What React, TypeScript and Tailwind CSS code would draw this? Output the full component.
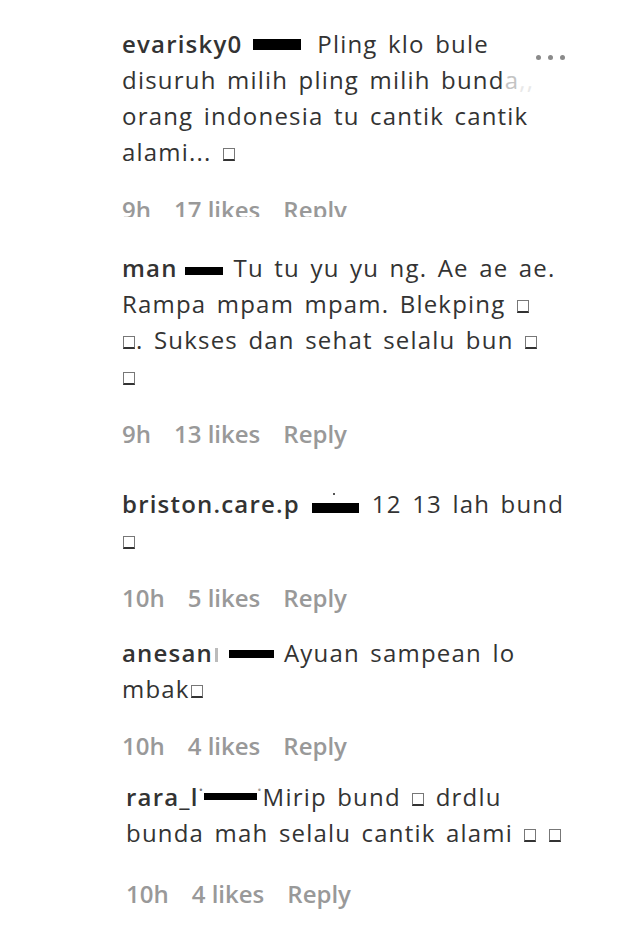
import React from "react";

const Bar = ({ cls }: { cls: string }) => <span className={`inline-block bg-black ${cls}`} />;

const Tofu = () => (
  <span className="inline-block w-[12px] h-[13px] border border-[#777] border-b-2 border-b-[#333] align-[0px] mx-[1px]" />
);

const Meta = ({ time, likes, extra }: { time: string; likes: string; extra?: string }) => (
  <div className={`flex gap-[23px] font-semibold text-[#999] whitespace-nowrap tracking-normal [word-spacing:0px] ${extra ?? ""}`}>
    <span>{time}</span>
    <span>{likes}</span>
    <span>Reply</span>
  </div>
);

const Name = ({ children }: { children: React.ReactNode }) => (
  <span className="font-semibold text-[#333]">{children}</span>
);

export default function App() {
  return (
    <div className="w-[640px] h-[928px] bg-white overflow-hidden font-['Open_Sans',sans-serif] text-[24px] leading-[36px] text-[#333]">
      <div className="pl-[122px] pt-[26px]">
        {/* Comment 1 */}
        <div className="flex">
          <div className="w-[414px] shrink-0 whitespace-nowrap tracking-[1.2px] [word-spacing:3px]">
            <div>
              <Name>evarisky0</Name>{" "}
              <Bar cls="w-[48px] h-[11px] align-[3px] mr-[6px]" /> Pling klo bule
            </div>
            <div>
              disuruh milih pling milih bund<span className="text-[#c4c4c4]">a</span>
              <span className="text-[#e8e8e8]">,,</span>
            </div>
            <div>orang indonesia tu cantik cantik</div>
            <div>
              alami... <Tofu />
            </div>
          </div>
          <div className="flex gap-[7px] pt-[29px]">
            <span className="w-[5px] h-[5px] rounded-full bg-[#8a8a8a]" />
            <span className="w-[5px] h-[5px] rounded-full bg-[#8a8a8a]" />
            <span className="w-[5px] h-[5px] rounded-full bg-[#8a8a8a]" />
          </div>
        </div>
        <div className="mt-[22px] h-[25px] overflow-hidden">
          <Meta time="9h" likes="17 likes" />
        </div>

        {/* Comment 2 */}
        <div className="mt-[33px] whitespace-nowrap tracking-[1.2px] [word-spacing:3px]">
          <div>
            <Name>man</Name>{" "}
            <Bar cls="w-[38px] h-[8px] align-[2px] -ml-[3px]" /> Tu tu yu yu ng. Ae ae ae.
          </div>
          <div>
            Rampa mpam mpam. Blekping <Tofu />
          </div>
          <div>
            <Tofu />. Sukses dan sehat selalu bun <Tofu />
          </div>
          <div>
            <Tofu />
          </div>
        </div>
        <Meta time="9h" likes="13 likes" extra="mt-[22px]" />

        {/* Comment 3 */}
        <div className="mt-[34px] whitespace-nowrap tracking-[1.2px] [word-spacing:3px]">
          <div>
            <Name>briston.care.p</Name>{" "}
            <span className="relative inline-block align-[0px] ml-[2px] mr-[2px]">
              <span className="block w-[47px] h-[10px] bg-black" />
              <span className="absolute left-[21px] -top-[10px] w-[2px] h-[2px] bg-[#555]" />
            </span>{" "}
            12 13 lah bund
          </div>
          <div>
            <Tofu />
          </div>
        </div>
        <Meta time="10h" likes="5 likes" extra="mt-[22px]" />

        {/* Comment 4 */}
        <div className="mt-[19px] whitespace-nowrap tracking-[1.2px] [word-spacing:3px]">
          <div>
            <Name>anesan</Name>
            <span className="inline-block w-[3px] h-[14px] bg-[#bbb] align-[0px] ml-[2px]" />{" "}
            <Bar cls="w-[45px] h-[8px] align-[4px]" /> Ayuan sampean lo
          </div>
          <div>
            mbak<Tofu />
          </div>
        </div>
        <Meta time="10h" likes="4 likes" extra="mt-[21px]" />

        {/* Comment 5 */}
        <div className="pl-[4px]">
          <div className="mt-[15px] whitespace-nowrap tracking-[1.2px] [word-spacing:3px]">
            <div>
              <Name>rara_l</Name>
              <span className="text-[#777]">˙</span>
              <Bar cls="w-[53px] h-[7px] align-[6px]" />
              <span className="text-[#999]">˙</span>Mirip bund <Tofu /> drdlu
            </div>
            <div>
              bunda mah selalu cantik alami <Tofu /> <Tofu />
            </div>
          </div>
          <Meta time="10h" likes="4 likes" extra="mt-[25px]" />
        </div>
      </div>
    </div>
  );
}
